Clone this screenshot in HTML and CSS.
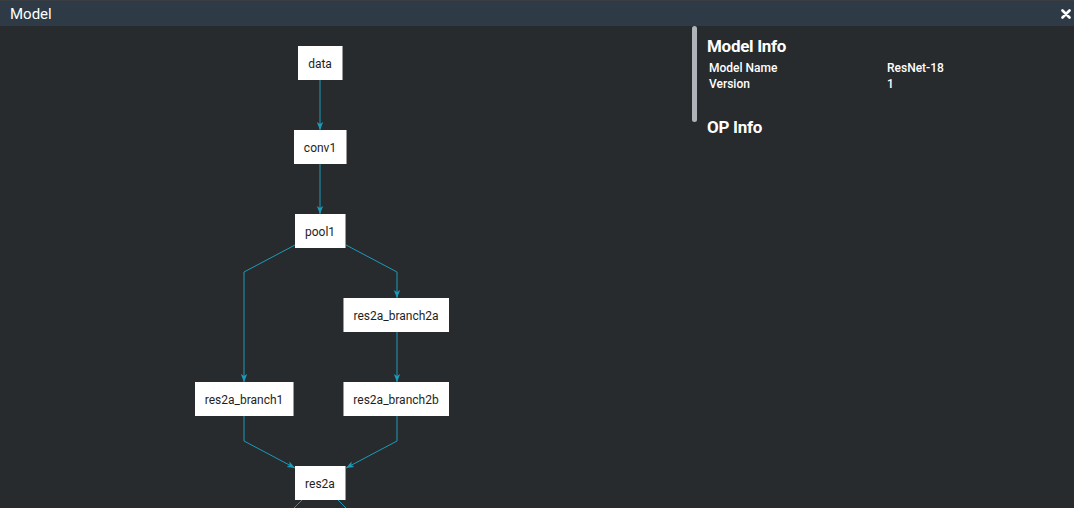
FILE: index.html
```html
<!DOCTYPE html>
<html lang="en">
<head>
  <meta charset="UTF-8" />
  <title>Model</title>
  <link rel="stylesheet" href="styles.css">
</head>
<body>
  <div class="window">
    <div class="title-bar">
      <span class="title">Model</span>
      <svg class="close" width="10" height="10" viewBox="0 0 10 10">
        <path d="M1.5 1.5 L8.5 8.5 M8.5 1.5 L1.5 8.5" stroke="#ffffff" stroke-width="2.6" stroke-linecap="round"/>
      </svg>
    </div>

    <div class="content">
      <!-- graph canvas -->
      <div class="graph">
        <svg width="692" height="482" viewBox="0 26 692 482">
          <defs>
            <marker id="arrow" viewBox="0 0 8 8" refX="8" refY="4" markerWidth="8" markerHeight="8" markerUnits="userSpaceOnUse" orient="auto">
              <path d="M0 0.8 L8 4 L0 7.2 L2 4 Z" fill="#1a9cb8"/>
            </marker>
          </defs>
          <g class="edges">
            <path d="M320 80 L320 130" marker-end="url(#arrow)"/>
            <path d="M320 164 L320 214" marker-end="url(#arrow)"/>
            <path d="M295 245 L244 272 L244 382" marker-end="url(#arrow)"/>
            <path d="M346 245 L397 272 L397 298" marker-end="url(#arrow)"/>
            <path d="M397 332 L397 382" marker-end="url(#arrow)"/>
            <path d="M244 415 L244 441 L295 468" marker-end="url(#arrow)"/>
            <path d="M397 415 L397 441 L346 468" marker-end="url(#arrow)"/>
            <path d="M302 500 L292 510"/>
            <path d="M338 500 L348 510"/>
          </g>
          <g class="nodes">
            <rect x="298" y="46" width="44" height="34"/><rect class="edge-shade" x="342" y="46" width="1" height="34"/>
            <text x="320" y="68">data</text>

            <rect x="294" y="130" width="52" height="34"/><rect class="edge-shade" x="346" y="130" width="1" height="34"/>
            <text x="320" y="152">conv1</text>

            <rect x="295" y="214" width="50" height="34"/><rect class="edge-shade" x="345" y="214" width="1" height="34"/>
            <text x="320" y="236">pool1</text>

            <rect x="344" y="298" width="105" height="34"/><rect class="edge-shade" x="343" y="298" width="1" height="34"/>
            <text x="396" y="320">res2a_branch2a</text>

            <rect x="195" y="382" width="98" height="34"/><rect class="edge-shade" x="293" y="382" width="1" height="34"/>
            <text x="244" y="404">res2a_branch1</text>

            <rect x="344" y="382" width="105" height="34"/><rect class="edge-shade" x="343" y="382" width="1" height="34"/>
            <text x="396" y="404">res2a_branch2b</text>

            <rect x="295" y="466" width="50" height="34"/><rect class="edge-shade" x="345" y="466" width="1" height="34"/>
            <text x="320" y="488">res2a</text>
          </g>
        </svg>
      </div>

      <!-- info panel -->
      <div class="info">
        <div class="scroll-thumb"></div>
        <div class="info-body">
          <h2>Model Info</h2>
          <table class="props">
            <tr><td>Model Name</td><td>ResNet-18</td></tr>
            <tr><td>Version</td><td>1</td></tr>
          </table>
          <h2 class="op-title">OP Info</h2>
        </div>
      </div>
    </div>
  </div>
</body>
</html>
```

FILE: styles.css
```css
* {
  margin: 0;
  padding: 0;
  box-sizing: border-box;
}

body {
  background: #282b2e;
  font-family: Roboto, 'Liberation Sans', sans-serif;
  color: #ffffff;
  width: 1074px;
  height: 508px;
  overflow: hidden;
}

.window {
  display: flex;
  flex-direction: column;
  height: 508px;
}

.title-bar {
  height: 26px;
  background: #2e3a46;
  border-top: 1px solid #3a3e42;
  display: flex;
  align-items: center;
  justify-content: space-between;
  padding: 0 3px 0 10px;
}

.title {
  font-size: 15px;
  line-height: 1;
  margin-top: 1px;
}

.close {
  margin-top: 1px;
}

.content {
  flex: 1;
  display: flex;
}

.graph {
  width: 692px;
  height: 482px;
  overflow: hidden;
}

.graph svg {
  display: block;
}

.edges path {
  fill: none;
  stroke: #1a9cb8;
  stroke-width: 1;
}

.nodes rect {
  fill: #ffffff;
}

.nodes rect.edge-shade {
  fill: #9a9a9a;
}

.nodes text {
  font-family: Roboto, 'Liberation Sans', sans-serif;
  font-size: 12px;
  fill: #1e1e1e;
  text-anchor: middle;
}

.info {
  flex: 1;
  display: flex;
}

.scroll-thumb {
  width: 5px;
  height: 96px;
  background: #b0b3b8;
  border-radius: 3px;
}

.info-body {
  flex: 1;
  padding: 10px 0 0 10px;
}

h2 {
  font-size: 17px;
  font-weight: bold;
  line-height: 20px;
  letter-spacing: -0.3px;
}

.props {
  border-collapse: collapse;
  margin: 4px 0 0 2px;
}

.props td {
  font-size: 12px;
  font-weight: 500;
  line-height: 16px;
  padding: 0;
}

.props td:first-child {
  width: 178px;
}

.op-title {
  margin-top: 25px;
}
```
